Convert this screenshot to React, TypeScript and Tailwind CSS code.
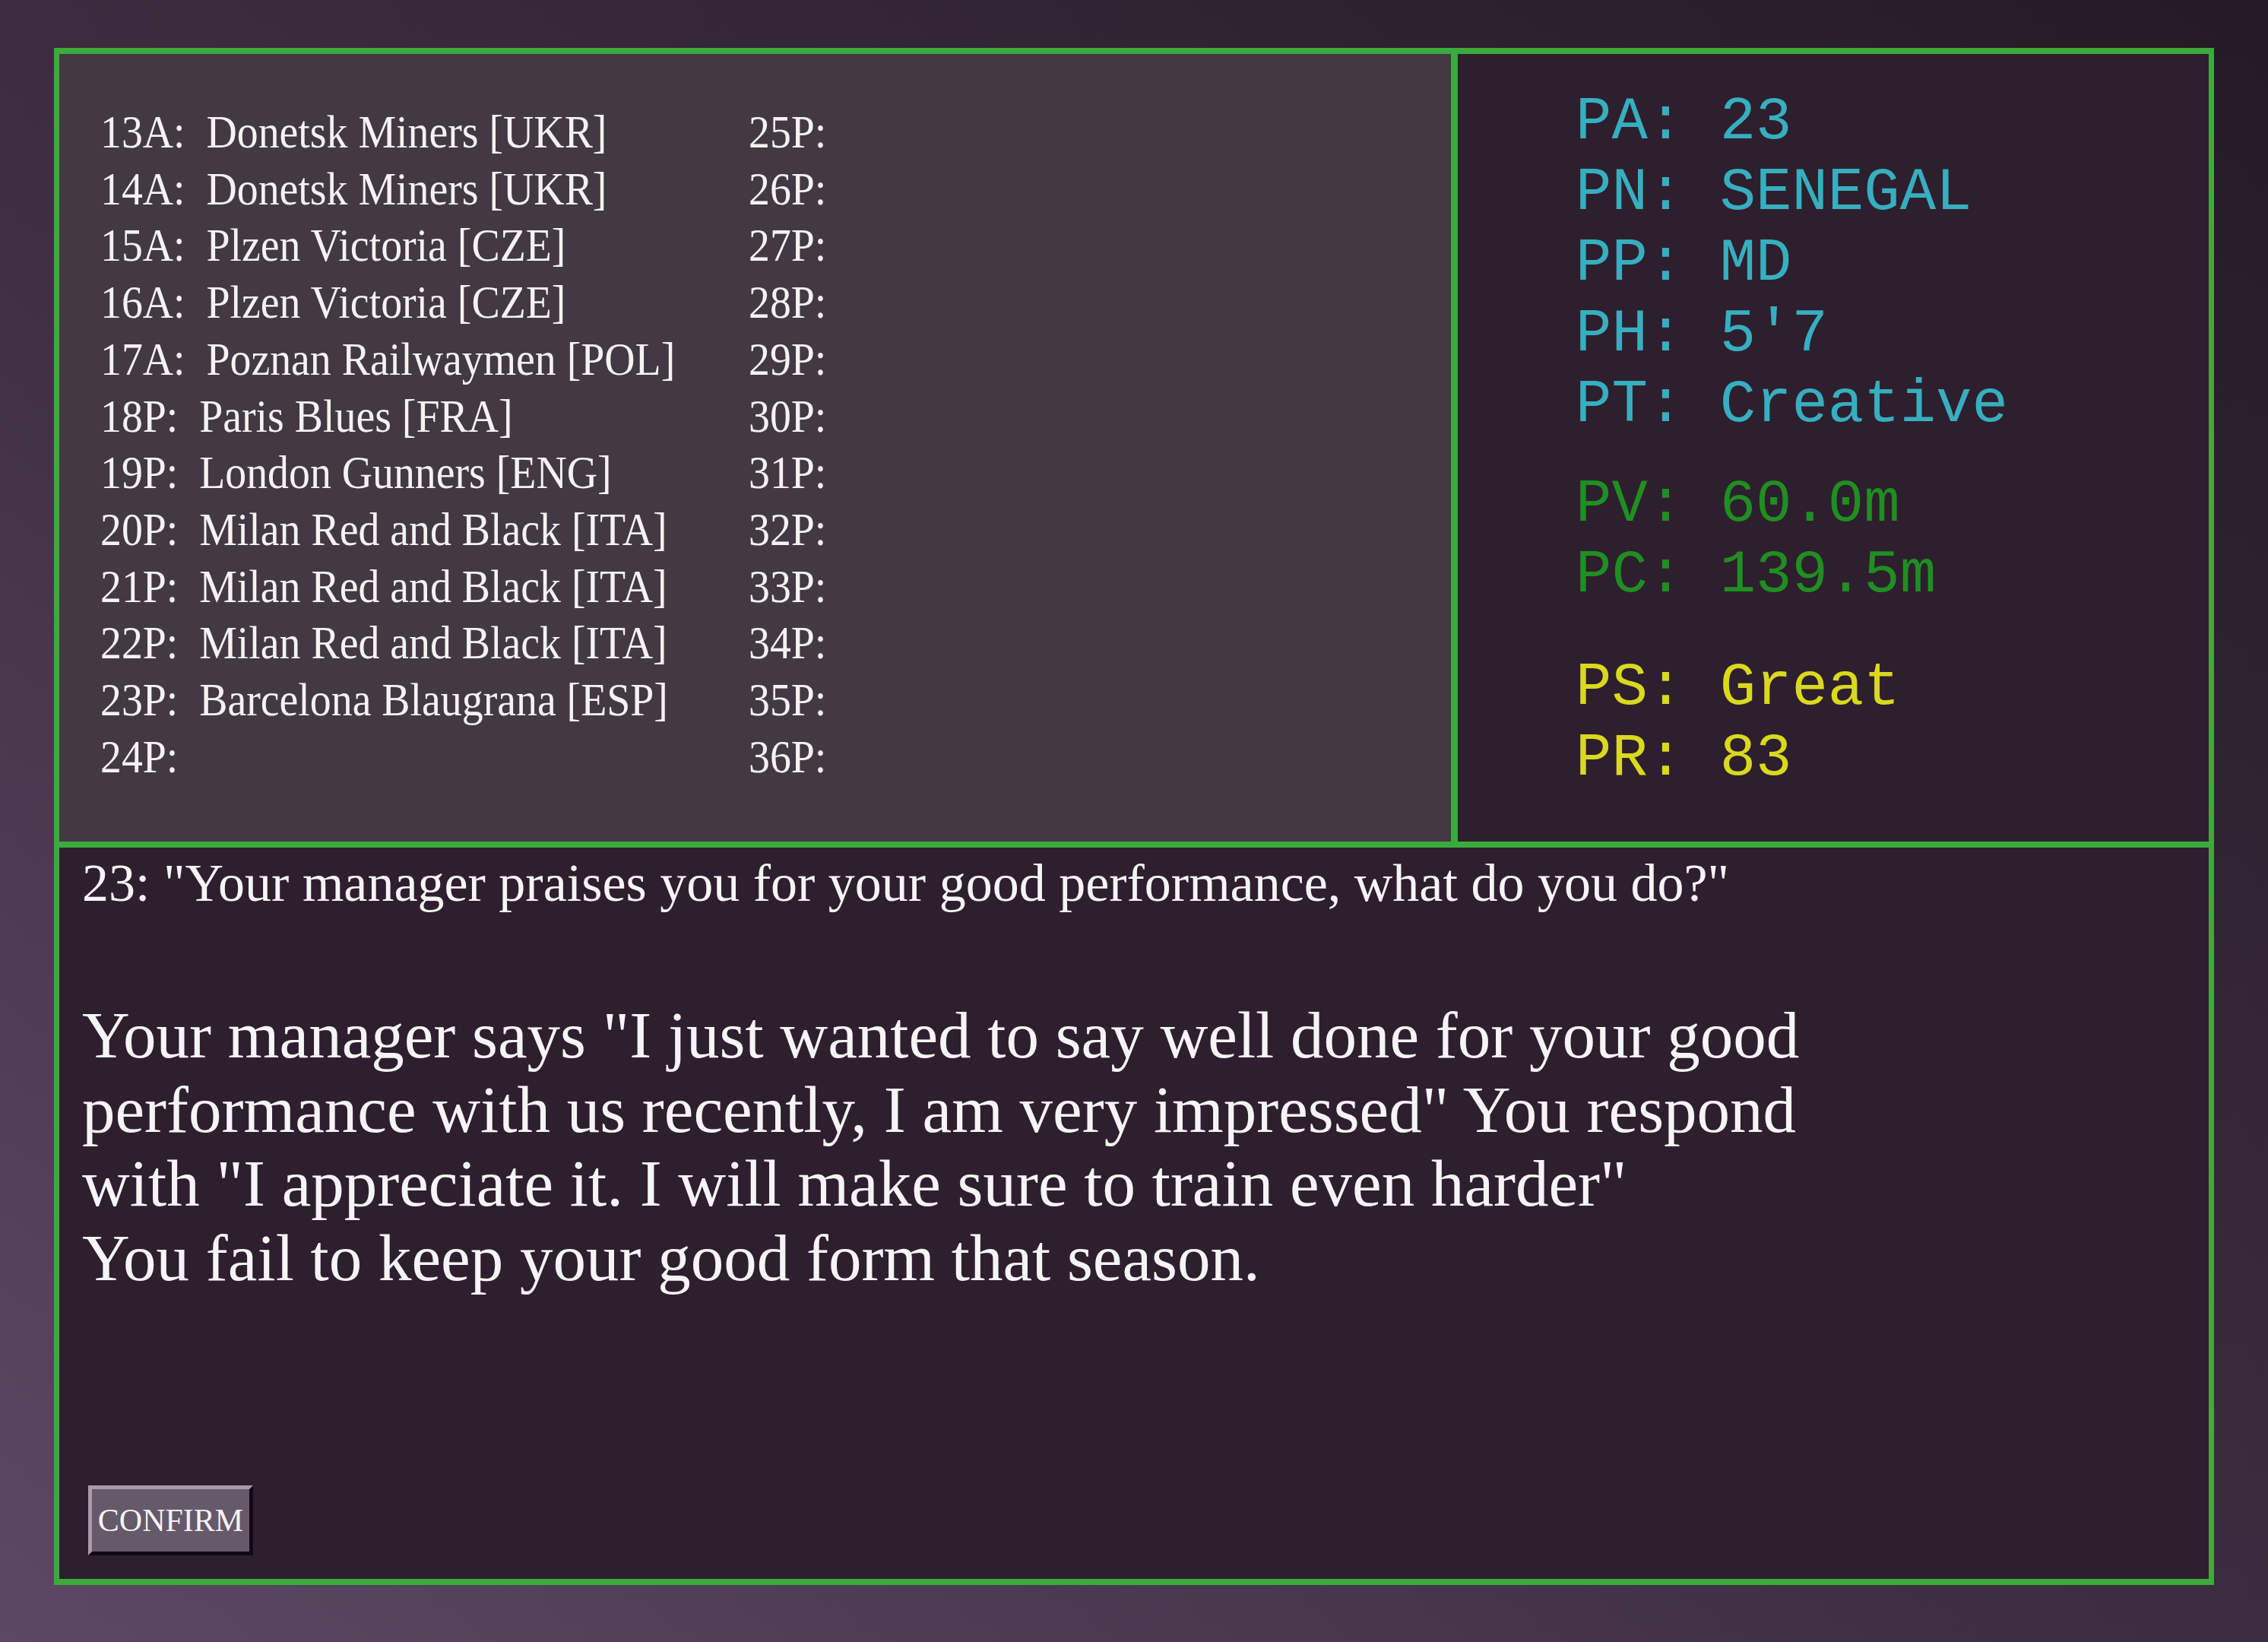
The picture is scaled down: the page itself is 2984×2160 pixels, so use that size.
import React from "react";

const leftRows = [
  "13A:\u00a0 Donetsk Miners [UKR]",
  "14A:\u00a0 Donetsk Miners [UKR]",
  "15A:\u00a0 Plzen Victoria [CZE]",
  "16A:\u00a0 Plzen Victoria [CZE]",
  "17A:\u00a0 Poznan Railwaymen [POL]",
  "18P:\u00a0 Paris Blues [FRA]",
  "19P:\u00a0 London Gunners [ENG]",
  "20P:\u00a0 Milan Red and Black [ITA]",
  "21P:\u00a0 Milan Red and Black [ITA]",
  "22P:\u00a0 Milan Red and Black [ITA]",
  "23P:\u00a0 Barcelona Blaugrana [ESP]",
  "24P:",
];

const rightRows = [
  "25P:", "26P:", "27P:", "28P:", "29P:", "30P:",
  "31P:", "32P:", "33P:", "34P:", "35P:", "36P:",
];

export default function App() {
  return (
    <div className="w-full h-[2160px] overflow-hidden bg-[linear-gradient(to_top_right,#5c4863_0%,#3e2e42_45%,#241a25_100%)] pt-[63px] pl-[71px]">
      <div className="w-[2842px] h-[2022px] border-x-[7px] border-y-[8px] border-[#3bab3b] flex flex-col">
        {/* Top: career history + player stats */}
        <div className="flex h-[1036px] shrink-0">
          <div className="w-[1831px] bg-[#433942] pl-[54px] pt-[65px] flex font-['Liberation_Serif',serif] text-[62px] leading-[74.7px] text-[#f4f2f4]">
            <div className="w-[853px] shrink-0 origin-left scale-x-90 whitespace-nowrap">
              {leftRows.map((r) => (
                <div key={r}>{r}</div>
              ))}
            </div>
            <div className="origin-left scale-x-90 whitespace-nowrap">
              {rightRows.map((r) => (
                <div key={r}>{r}</div>
              ))}
            </div>
          </div>
          <div className="flex-1 border-l-[9px] border-[#3bab3b] bg-[#2e1f2e] pl-[155px] pt-[44px] font-['Liberation_Mono',monospace] text-[79px] leading-[93px] whitespace-pre">
            <div className="text-[#36afc0]">
              <div>PA: 23</div>
              <div>PN: SENEGAL</div>
              <div>PP: MD</div>
              <div>PH: 5'7</div>
              <div>PT: Creative</div>
            </div>
            <div className="text-[#1f8f22] mt-[38px]">
              <div>PV: 60.0m</div>
              <div>PC: 139.5m</div>
            </div>
            <div className="text-[#d9d91e] mt-[55px]">
              <div>PS: Great</div>
              <div>PR: 83</div>
            </div>
          </div>
        </div>

        {/* Bottom: event + choice */}
        <div className="flex-1 border-t-[8px] border-[#3bab3b] bg-[#2e1f2e] px-[30px] pt-[4px] pb-[31px] flex flex-col font-['Liberation_Serif',serif] text-[#f6f4f6]">
          <p className="text-[70px] leading-[86px] whitespace-nowrap">
            23: "Your manager praises you for your good performance, what do you do?"
          </p>
          <p className="mt-[108px] text-[87px] leading-[97.5px] whitespace-nowrap">
            Your manager says "I just wanted to say well done for your good
            <br />
            performance with us recently, I am very impressed" You respond
            <br />
            with "I appreciate it. I will make sure to train even harder"
            <br />
            You fail to keep your good form that season.
          </p>
          <button
            type="button"
            className="mt-auto ml-[8px] w-[217px] h-[92px] bg-[#665969] border-[5px] border-t-[#a99ca9] border-l-[#a99ca9] border-b-[#120a12] border-r-[#120a12] text-[42px] leading-none text-[#f4f2f4] font-['Liberation_Serif',serif]"
          >
            CONFIRM
          </button>
        </div>
      </div>
    </div>
  );
}
